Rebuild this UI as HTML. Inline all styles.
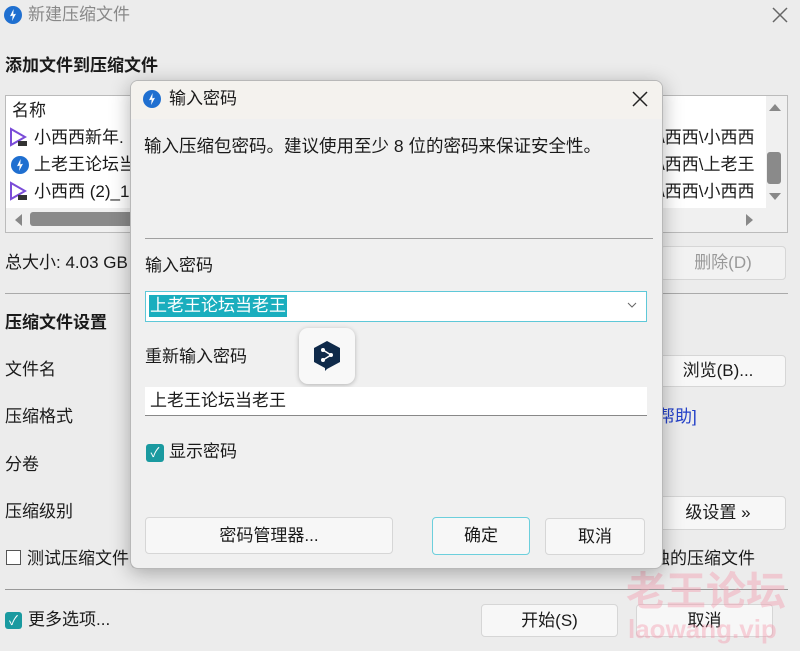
<!DOCTYPE html>
<html><head><meta charset="utf-8"><style>
*{margin:0;padding:0;box-sizing:border-box}
body{width:800px;height:651px;overflow:hidden;background:#ececec;font-family:"Liberation Sans","Noto Sans CJK SC",sans-serif;font-size:17px;color:#1a1a1a;position:relative}
.a{position:absolute;white-space:nowrap;line-height:22px}
.btn{position:absolute;background:#f7f7f7;border:1px solid #d6d6d6;border-radius:4px;text-align:center;font-size:17px}
.ic{position:absolute;width:18px;height:18px;border-radius:50%;background:#1f6fd0}
.ic:after{content:"";position:absolute;left:6px;top:3px;width:6px;height:12px;background:#fff;clip-path:polygon(60% 0,0 60%,45% 55%,35% 100%,100% 40%,55% 45%)}
.play{position:absolute;width:18px;height:20px}
.x{position:absolute}
</style></head><body>
<div class="ic" style="left:4px;top:6px"></div>
<div class="a" style="left:28px;top:4px;color:#888">新建压缩文件</div>
<svg class="x" style="left:772px;top:7px" width="16" height="16"><path d="M1 1L15 15M15 1L1 15" stroke="#666" stroke-width="1.5"/></svg>
<div class="a" style="left:5px;top:55px;font-weight:bold">添加文件到压缩文件</div>
<div class="a" style="left:5px;top:95px;width:783px;height:138px;border:1px solid #bbb;background:#fff"></div>
<div class="a" style="left:12px;top:100px">名称</div>
<svg class="play" style="left:9px;top:127px"><path d="M2 2L16 10L2 18Z" fill="none" stroke="#7a4cd8" stroke-width="2"/><rect x="9" y="14" width="9" height="5" fill="#333"/></svg><div class="a" style="left:34px;top:127px">小西西新年.</div>
<div class="ic" style="left:11px;top:156px"></div><div class="a" style="left:34px;top:154px">上老王论坛当</div>
<svg class="play" style="left:9px;top:181px"><path d="M2 2L16 10L2 18Z" fill="none" stroke="#7a4cd8" stroke-width="2"/><rect x="9" y="14" width="9" height="5" fill="#333"/></svg><div class="a" style="left:34px;top:181px">小西西 (2)_1</div>
<div class="a" style="left:660px;top:127px">\西西\小西西</div>
<div class="a" style="left:660px;top:154px">\西西\上老王</div>
<div class="a" style="left:660px;top:181px">\西西\小西西</div>
<div class="a" style="left:766px;top:96px;width:21px;height:136px;background:#f0f0f0"></div>
<div class="a" style="left:769px;top:104px;border-left:6px solid transparent;border-right:6px solid transparent;border-bottom:7px solid #888"></div>
<div class="a" style="left:769px;top:193px;border-left:6px solid transparent;border-right:6px solid transparent;border-top:7px solid #888"></div>
<div class="a" style="left:767px;top:152px;width:14px;height:32px;background:#8a8a8a;border-radius:3px"></div>
<div class="a" style="left:6px;top:208px;width:760px;height:24px;background:#f0f0f0"></div>
<div class="a" style="left:746px;top:214px;border-top:6px solid transparent;border-bottom:6px solid transparent;border-left:7px solid #888"></div>
<div class="a" style="left:15px;top:214px;border-top:6px solid transparent;border-bottom:6px solid transparent;border-right:7px solid #888"></div>
<div class="a" style="left:30px;top:212px;width:110px;height:14px;background:#8a8a8a;border-radius:3px"></div>
<div class="a" style="left:5px;top:252px">总大小: 4.03 GB</div>
<div class="btn" style="left:660px;top:246px;width:126px;height:34px;line-height:32px;color:#999;background:#f2f2f2">删除(D)</div>
<div class="a" style="left:5px;top:293px;width:783px;border-top:1px solid #aaa"></div>
<div class="a" style="left:5px;top:312px;font-weight:bold">压缩文件设置</div>
<div class="a" style="left:5px;top:359px">文件名</div>
<div class="a" style="left:5px;top:406px">压缩格式</div>
<div class="a" style="left:5px;top:454px">分卷</div>
<div class="a" style="left:5px;top:501px">压缩级别</div>
<div class="btn" style="left:650px;top:355px;width:136px;height:32px;line-height:30px">浏览(B)...</div>
<div class="a" style="left:658px;top:406px;color:#2340c8">帮助]</div>
<div class="btn" style="left:650px;top:496px;width:136px;height:34px;line-height:32px">级设置 »</div>
<div class="a" style="left:6px;top:550px;width:15px;height:15px;border:1px solid #555;background:#fff"></div>
<div class="a" style="left:27px;top:548px">测试压缩文件(</div>
<div class="a" style="left:653px;top:548px">独的压缩文件</div>
<div class="a" style="left:5px;top:589px;width:783px;border-top:1px solid #999"></div>
<div class="a" style="left:5px;top:612px;width:17px;height:17px;border-radius:3px;background:#1a9aa0;color:#fff;font-size:13px;text-align:center;line-height:17px">✓</div>
<div class="a" style="left:28px;top:609px">更多选项...</div>
<div class="btn" style="left:481px;top:604px;width:137px;height:33px;line-height:31px">开始(S)</div>
<div class="btn" style="left:636px;top:604px;width:137px;height:33px;line-height:31px">取消</div>
<div class="a" style="left:626px;top:570px;font-size:40px;line-height:44px;font-weight:bold;color:rgba(245,150,170,.4)">老王论坛</div>
<div class="a" style="left:628px;top:614px;font-size:26px;line-height:30px;font-weight:bold;color:rgba(245,150,170,.4)">laowang.vip</div>

<div class="a" style="left:130px;top:80px;width:533px;height:489px;background:#f0f0f0;border:1px solid #b8b8b8;border-radius:8px;box-shadow:0 4px 20px rgba(0,0,0,.3);overflow:hidden">
<div class="a" style="left:0;top:0;width:533px;height:38px;background:#f4f2ee"></div>
<div class="ic" style="left:12px;top:9px"></div>
<div class="a" style="left:38px;top:7px">输入密码</div>
<svg class="x" style="left:501px;top:10px" width="16" height="16"><path d="M1 1L15 15M15 1L1 15" stroke="#222" stroke-width="1.5"/></svg>
<div class="a" style="left:13px;top:54px;font-size:17.5px">输入压缩包密码。建议使用至少 8 位的密码来保证安全性。</div>
<div class="a" style="left:14px;top:157px;width:508px;border-top:1px solid #a0a0a0"></div>
<div class="a" style="left:14px;top:174px">输入密码</div>
<div class="a" style="left:14px;top:210px;width:502px;height:31px;border:1px solid #5ec8d8;background:#fff"></div>
<div class="a" style="left:18px;top:214px;background:#1aaebe;color:#fff;line-height:22px;padding:0 1px">上老王论坛当老王</div>
<svg class="x" style="left:496px;top:221px" width="10" height="7"><path d="M1 1L5 5L9 1" stroke="#666" fill="none"/></svg>
<div class="a" style="left:14px;top:265px">重新输入密码</div>
<div class="a" style="left:168px;top:247px;width:56px;height:56px;background:#f8f8f8;border-radius:9px;box-shadow:0 1px 5px rgba(0,0,0,.25)"></div>
<svg class="a" style="left:182px;top:259px" width="28" height="32" viewBox="0 0 28 32"><path d="M14 1 L27 8 V22 L14 29 L12 31 V28 L1 22 V8 Z" fill="#0f2a4a"/><path d="M10 10 L18 15 L10 20" stroke="#fff" stroke-width="1.5" fill="none"/><circle cx="10" cy="10" r="2" fill="#fff"/><circle cx="18" cy="15" r="2" fill="#fff"/><circle cx="10" cy="20" r="2" fill="#fff"/></svg>
<div class="a" style="left:14px;top:306px;width:502px;height:29px;border-bottom:1px solid #888;background:#fff"></div>
<div class="a" style="left:19px;top:309px">上老王论坛当老王</div>
<div class="a" style="left:15px;top:363px;width:18px;height:18px;border-radius:3px;background:#1a9aa0;color:#fff;font-size:13px;text-align:center;line-height:18px">✓</div>
<div class="a" style="left:38px;top:360px">显示密码</div>
<div class="btn" style="left:14px;top:436px;width:248px;height:37px;line-height:35px">密码管理器...</div>
<div class="btn" style="left:301px;top:436px;width:98px;height:38px;line-height:36px;border:1px solid #6ccfdc">确定</div>
<div class="btn" style="left:414px;top:437px;width:100px;height:37px;line-height:35px">取消</div>
</div>
</body></html>
